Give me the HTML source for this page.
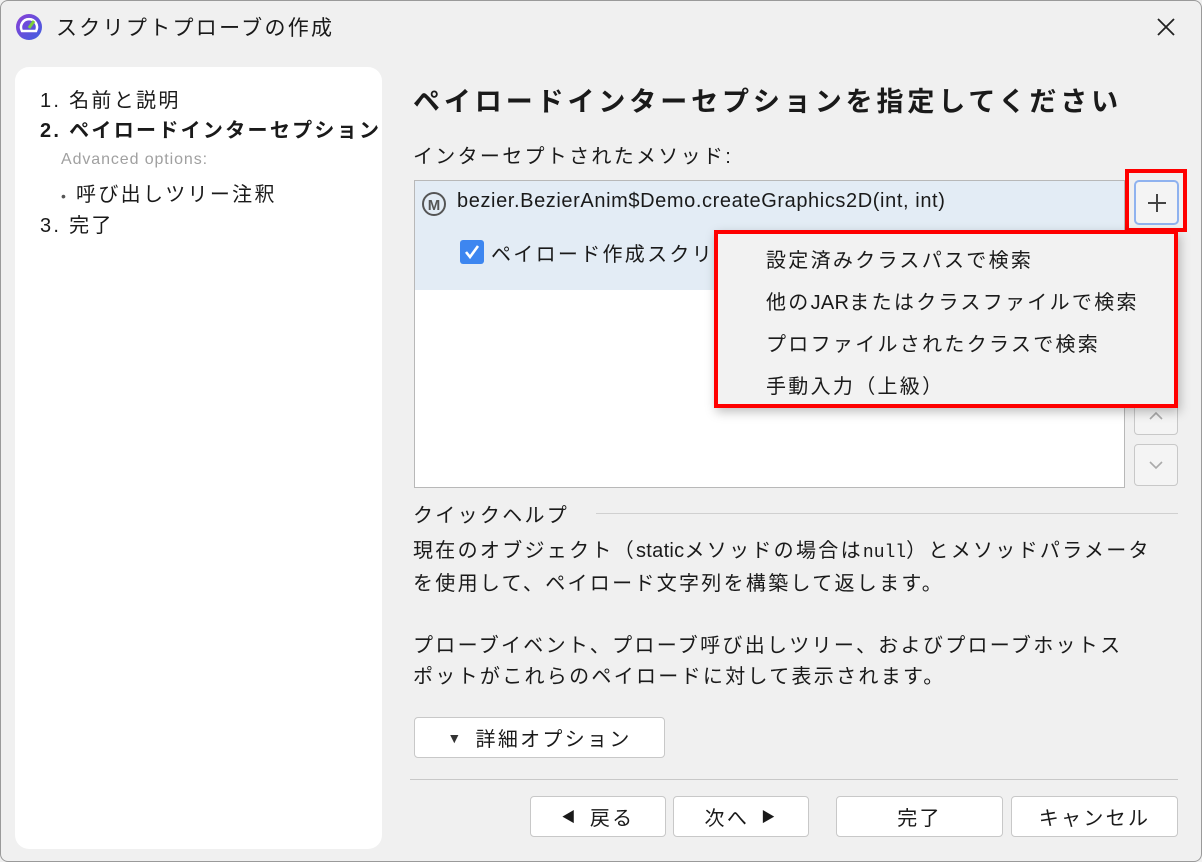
<!DOCTYPE html>
<html><head><meta charset="utf-8"><style>
*{margin:0;padding:0;box-sizing:border-box}
body{width:1202px;height:862px;background:#f0f0f0;font-family:"Liberation Sans","Noto Sans CJK JP",sans-serif;color:#1a1a1a;position:relative;overflow:hidden;letter-spacing:2.3px}
.win{position:absolute;left:0;top:0;width:1202px;height:862px;border:1px solid #9a9a9a;border-radius:8px;background:#f0f0f0}
.a{position:absolute;white-space:nowrap}
.btn{position:absolute;background:#fff;border:1px solid #c8c8c8;border-radius:4px;font-size:20px;display:flex;align-items:center;justify-content:center}
.l{letter-spacing:0.3px}
</style></head><body>
<div class="win"></div>
<svg class="a" style="left:15px;top:13px" width="28" height="28" viewBox="0 0 28 28"><defs><linearGradient id="g" x1="0" y1="0" x2="1" y2="1"><stop offset="0" stop-color="#8a3fd6"/><stop offset="1" stop-color="#3f5fe0"/></linearGradient></defs><circle cx="14" cy="14" r="13" fill="url(#g)"/><path d="M7 18 A8 8 0 1 1 21 18 Z" fill="none" stroke="#fff" stroke-width="2.5"/><path d="M14 15 L19 8" stroke="#7ccf3a" stroke-width="3"/></svg>
<div class="a" style="left:56px;top:12px;font-size:21px">スクリプトプローブの作成</div>
<svg class="a" style="left:1156px;top:17px" width="20" height="20"><path d="M2 2L18 18M18 2L2 18" stroke="#222" stroke-width="1.8"/></svg>
<div class="a" style="left:15px;top:67px;width:367px;height:782px;background:#fff;border-radius:14px;overflow:hidden">
<div class="a" style="left:25px;top:17px;font-size:20px">1. 名前と説明</div>
<div class="a" style="left:25px;top:47px;font-size:20px;font-weight:bold">2. ペイロードインターセプション</div>
<div class="a" style="left:46px;top:84px;font-size:16px;color:#a0a0a0;letter-spacing:0.9px">Advanced options:</div>
<div class="a" style="left:46px;top:111px;font-size:20px"><span style="font-size:14px;color:#555">•</span>&nbsp;呼び出しツリー注釈</div>
<div class="a" style="left:25px;top:142px;font-size:20px">3. 完了</div>
</div>
<div class="a" style="left:413px;top:80px;font-size:27px;font-weight:bold;letter-spacing:3.9px">ペイロードインターセプションを指定してください</div>
<div class="a" style="left:413px;top:140px;font-size:20px">インターセプトされたメソッド:</div>
<div class="a" style="left:414px;top:180px;width:711px;height:308px;background:#fff;border:1px solid #b8b8b8">
<div class="a" style="left:0;top:0;width:709px;height:109px;background:#e3ecf5"></div>
<svg class="a" style="left:6px;top:10px" width="26" height="26"><circle cx="13" cy="13" r="11" fill="none" stroke="#555" stroke-width="2"/><text x="13" y="19" text-anchor="middle" font-size="15" font-weight="bold" fill="#555" font-family="Liberation Sans" letter-spacing="0">M</text></svg>
<div class="a" style="left:42px;top:9px;font-size:20px;letter-spacing:0.6px">bezier.BezierAnim$Demo.createGraphics2D(int, int)</div>
<div class="a" style="left:45px;top:59px;width:24px;height:24px;background:#3d86f0;border-radius:3px"><svg width="24" height="24"><path d="M6 12L10 17L18 6" stroke="#fff" stroke-width="2.6" fill="none"/></svg></div>
<div class="a" style="left:76px;top:57px;font-size:20px">ペイロード作成スクリ</div>
</div>
<div class="a" style="left:1125px;top:169px;width:62px;height:63px;border:4px solid #f00"></div>
<div class="btn" style="left:1134px;top:180px;width:45px;height:45px;border:2px solid #8fb2ef;border-radius:5px;background:#f4f4f4"><svg width="22" height="22"><path d="M11 2V20M2 11H20" stroke="#444" stroke-width="2"/></svg></div>
<div class="btn" style="left:1134px;top:395px;width:44px;height:40px;background:#f4f4f4"><svg width="16" height="10"><path d="M2 9L8 3L14 9" stroke="#aaa" stroke-width="1.6" fill="none"/></svg></div>
<div class="btn" style="left:1134px;top:444px;width:44px;height:42px;background:#f4f4f4"><svg width="16" height="10"><path d="M2 2L8 8L14 2" stroke="#aaa" stroke-width="1.6" fill="none"/></svg></div>
<div class="a" style="left:714px;top:230px;width:464px;height:178px;background:#f2f2f2;border:4px solid #f00;box-shadow:2px 4px 10px rgba(0,0,0,.25)">
<div class="a" style="left:48px;top:10px;font-size:20px">設定済みクラスパスで検索</div>
<div class="a" style="left:48px;top:52px;font-size:20px">他の<span class="l">JAR</span>またはクラスファイルで検索</div>
<div class="a" style="left:48px;top:94px;font-size:20px">プロファイルされたクラスで検索</div>
<div class="a" style="left:48px;top:136px;font-size:20px">手動入力（上級）</div>
</div>
<div class="a" style="left:413px;top:499px;font-size:20px">クイックヘルプ</div>
<div class="a" style="left:596px;top:513px;width:582px;height:1px;background:#d0d0d0"></div>
<div class="a" style="left:413px;top:536px;font-size:20px;line-height:31px">現在のオブジェクト（<span class="l">static</span>メソッドの場合は<span style="font-family:'Liberation Mono',monospace;font-size:18px;letter-spacing:0">null</span>）とメソッドパラメータ<br>を使用して、ペイロード文字列を構築して返します。<br><br>プローブイベント、プローブ呼び出しツリー、およびプローブホットス<br>ポットがこれらのペイロードに対して表示されます。</div>
<div class="btn" style="left:414px;top:717px;width:251px;height:41px"><span style="font-size:14px;color:#333;margin-right:12px">▼</span>詳細オプション</div>
<div class="a" style="left:410px;top:779px;width:768px;height:1px;background:#c8c8c8"></div>
<div class="btn" style="left:530px;top:796px;width:136px;height:41px"><span style="font-size:14px;margin-right:12px">◀</span>戻る</div>
<div class="btn" style="left:673px;top:796px;width:136px;height:41px">次へ<span style="font-size:14px;margin-left:12px">▶</span></div>
<div class="btn" style="left:836px;top:796px;width:167px;height:41px">完了</div>
<div class="btn" style="left:1011px;top:796px;width:167px;height:41px">キャンセル</div>
</body></html>
